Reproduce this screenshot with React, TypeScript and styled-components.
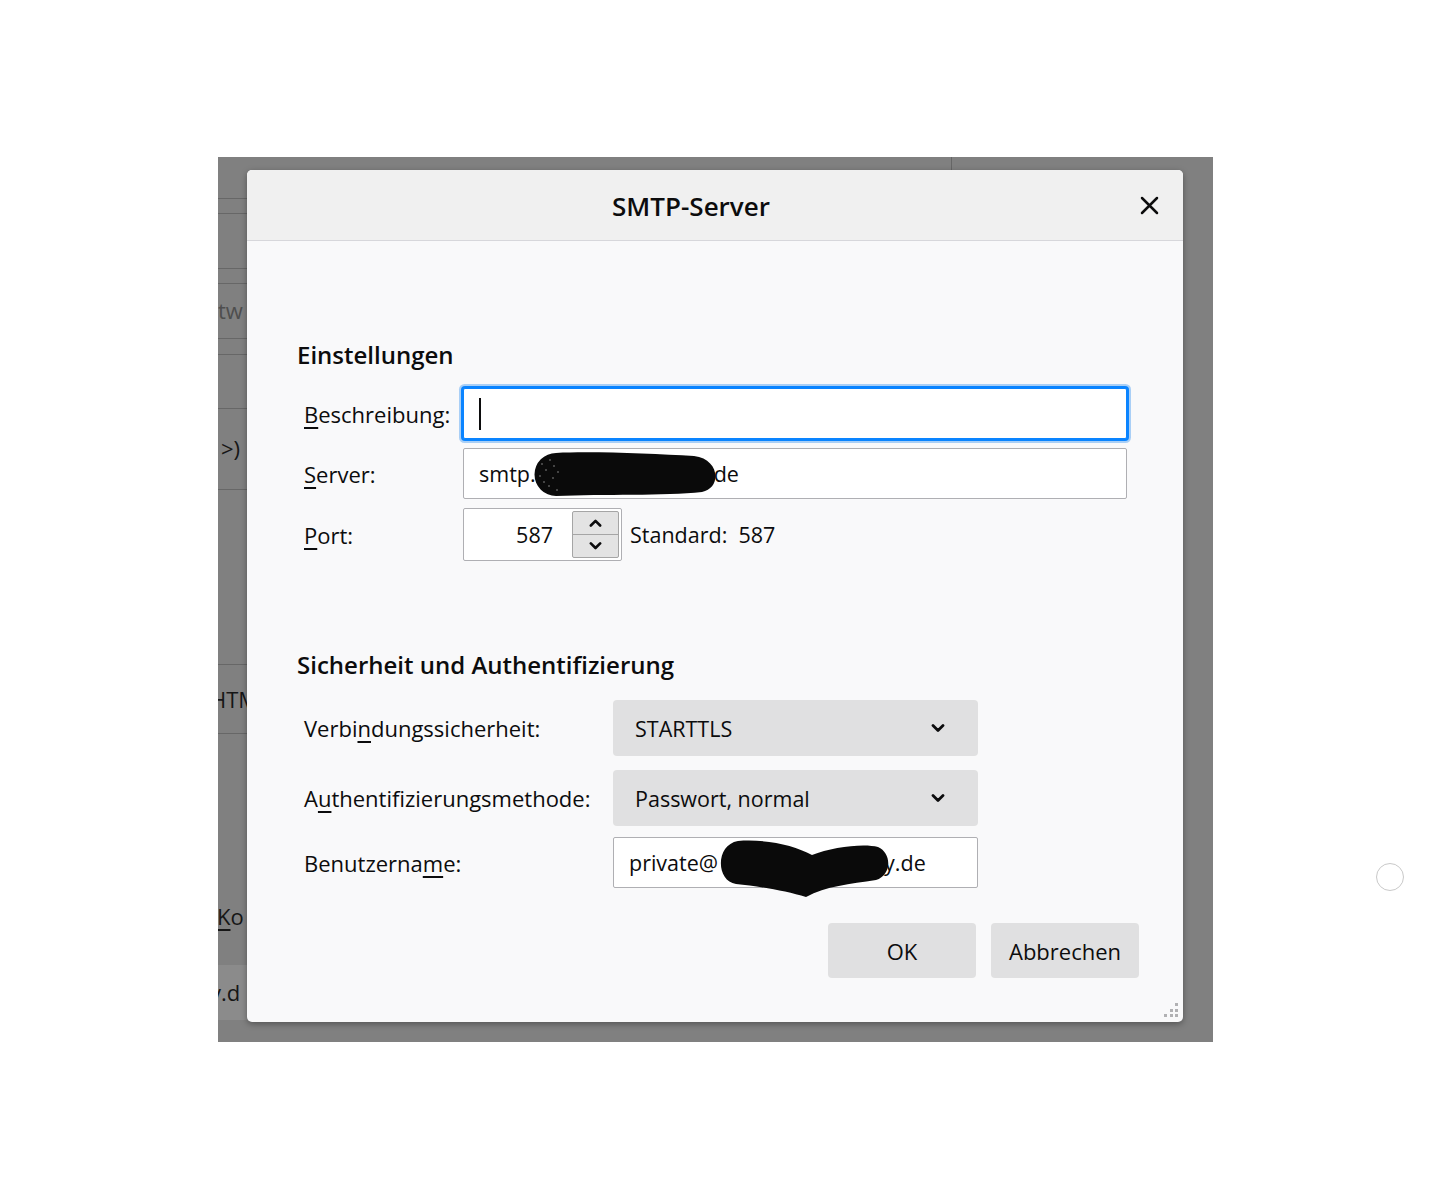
import React from 'react'
import styled, { createGlobalStyle } from 'styled-components'

const GlobalStyle = createGlobalStyle`
  html, body {
    margin: 0;
    padding: 0;
    background: #ffffff;
  }
  body {
    font-family: 'Open Sans', 'Noto Sans', sans-serif;
    color: #0c0c0d;
  }
`

const Page = styled.div`
  display: flex;
  align-items: flex-start;
  padding: 157px 0 0 218px;
  height: 1200px;
  box-sizing: border-box;
`

const Backdrop = styled.div`
  display: grid;
  grid-template-columns: 29px 936px 30px;
  grid-template-rows: 13px 852px 20px;
  background: #808080;
`

const TopStrip = styled.div`
  grid-column: 2 / 4;
  grid-row: 1;
  display: flex;
`

const TopCell = styled.div<{ $w: number }>`
  width: ${({ $w }) => $w}px;
  border-right: 1px solid #666666;
`

const SideStrip = styled.div`
  grid-column: 1;
  grid-row: 1 / 4;
  display: flex;
  flex-direction: column;
  overflow: hidden;
`

const SideRow = styled.div<{ $h: number; $line?: boolean; $band?: boolean }>`
  height: ${({ $h }) => $h}px;
  flex: none;
  box-sizing: border-box;
  border-bottom: ${({ $line }) => ($line ? '1px solid #676767' : 'none')};
  background: ${({ $band }) => ($band ? '#8b8b8b' : 'transparent')};
  display: flex;
  align-items: center;
  white-space: nowrap;
`

const SideText = styled.span<{ $x: number; $dim?: boolean; $y?: number }>`
  font-size: 22px;
  margin-left: ${({ $x }) => $x}px;
  margin-top: ${({ $y }) => $y ?? 0}px;
  color: ${({ $dim }) => ($dim ? '#4e4e4e' : '#161616')};
`

const Dialog = styled.div`
  grid-column: 2;
  grid-row: 2;
  display: flex;
  flex-direction: column;
  background: #f9f9fa;
  border-radius: 5px;
  box-shadow: 0 2px 6px rgba(0, 0, 0, 0.35);
  overflow: hidden;
  position: relative;
`

const Header = styled.div`
  height: 71px;
  flex: none;
  box-sizing: border-box;
  background: #f0f0f0;
  border-bottom: 1px solid #d7d7db;
  display: flex;
  align-items: center;
`

const Title = styled.div`
  flex: 1;
  text-align: center;
  font-size: 26px;
  font-weight: 600;
  color: #0c0c0d;
  padding-top: 2px;
`

const CloseButton = styled.button`
  flex: none;
  margin: 0 22px 0 2px;
  width: 24px;
  height: 24px;
  padding: 0;
  border: none;
  background: transparent;
  display: flex;
  align-items: center;
  justify-content: center;
`

const Body = styled.div`
  padding: 98px 56px 44px 50px;
  display: flex;
  flex-direction: column;
`

const SectionTitle = styled.h2<{ $top?: number }>`
  margin: ${({ $top }) => $top ?? 0}px 0 0 0;
  font-size: 24px;
  line-height: 32px;
  font-weight: 600;
  color: #0c0c0d;
`

const FieldGrid = styled.div<{ $label: number; $top: number }>`
  display: grid;
  grid-template-columns: ${({ $label }) => $label}px 1fr;
  margin-top: ${({ $top }) => $top}px;
`

const Label = styled.div<{ $gap?: number }>`
  margin-top: ${({ $gap }) => $gap ?? 0}px;
  padding-left: 7px;
  font-size: 22px;
  color: #0c0c0d;
  display: flex;
  align-items: center;
  white-space: nowrap;
`

const Key = styled.span`
  text-decoration: underline;
  text-decoration-thickness: 1.5px;
  text-underline-offset: 4px;
`

const Field = styled.div<{ $h: number; $w?: number; $gap?: number; $focused?: boolean }>`
  margin-top: ${({ $gap }) => $gap ?? 0}px;
  height: ${({ $h }) => $h}px;
  width: ${({ $w }) => ($w ? `${$w}px` : 'auto')};
  box-sizing: border-box;
  background: #ffffff;
  border: 1px solid ${({ $focused }) => ($focused ? '#0a84ff' : '#afafb3')};
  box-shadow: ${({ $focused }) => ($focused ? '0 0 0 2px #0a84ff, 0 0 0 4px #a9cff6' : 'none')};
  border-radius: 2px;
  padding-left: 15px;
  display: flex;
  align-items: center;
  font-size: 21.5px;
  color: #0c0c0d;
  white-space: nowrap;
`

const Caret = styled.span`
  width: 2px;
  height: 32px;
  background: #0c0c0d;
`

const Scribble = styled.svg<{ $ml: number; $mr: number; $mt: number }>`
  flex: none;
  margin: ${({ $mt }) => $mt}px ${({ $mr }) => $mr}px 0 ${({ $ml }) => $ml}px;
  position: relative;
  z-index: 1;
`

const PortRow = styled.div<{ $gap: number }>`
  margin-top: ${({ $gap }) => $gap}px;
  display: flex;
  align-items: center;
  gap: 8px;
`

const PortBox = styled.div`
  width: 159px;
  height: 53px;
  box-sizing: border-box;
  background: #ffffff;
  border: 1px solid #afafb3;
  border-radius: 2px;
  display: flex;
  align-items: center;
  justify-content: flex-end;
  padding-right: 2px;
  font-size: 21.5px;
`

const PortValue = styled.span`
  margin-right: 19px;
`

const Spinner = styled.div`
  width: 47px;
  height: 47px;
  box-sizing: border-box;
  border: 1px solid #a5a5a5;
  border-radius: 2px;
  background: #e3e3e3;
  display: grid;
  grid-template-rows: 1fr 1fr;
`

const SpinHalf = styled.div<{ $top?: boolean }>`
  display: flex;
  align-items: center;
  justify-content: center;
  border-bottom: ${({ $top }) => ($top ? '1px solid #a5a5a5' : 'none')};
`

const PlainText = styled.span`
  font-size: 21.5px;
  white-space: pre;
`

const Select = styled.div<{ $h: number; $gap?: number }>`
  margin-top: ${({ $gap }) => $gap ?? 0}px;
  width: 365px;
  height: ${({ $h }) => $h}px;
  box-sizing: border-box;
  background: #e0e0e1;
  border-radius: 4px;
  padding: 0 33px 0 22px;
  display: flex;
  align-items: center;
  justify-content: space-between;
  font-size: 21.5px;
  color: #0c0c0d;
`

const ButtonRow = styled.div`
  display: flex;
  justify-content: flex-end;
  gap: 15px;
  margin-top: 35px;
  margin-right: -12px;
`

const DialogButton = styled.button`
  width: 148px;
  height: 55px;
  border: none;
  border-radius: 4px;
  background: #e0e0e1;
  font-family: inherit;
  font-size: 22px;
  color: #0c0c0d;
  padding: 0;
`

const Grip = styled.div`
  position: absolute;
  right: 4px;
  bottom: 4px;
  width: 15px;
  height: 15px;
  display: grid;
  grid-template-columns: repeat(3, 3px);
  grid-template-rows: repeat(3, 3px);
  gap: 2.5px;
`

const GripDot = styled.span<{ $on: boolean }>`
  background: ${({ $on }) => ($on ? '#b1b1b3' : 'transparent')};
`

const Ring = styled.div`
  width: 26px;
  height: 26px;
  margin: 706px 0 0 163px;
  border-radius: 50%;
  border: 1.5px solid #c9c9c9;
`

const Chevron: React.FC<{ up?: boolean; size?: number }> = ({ up, size = 14 }) => (
  <svg width={size} height={size * 0.6} viewBox="0 0 14 8.4">
    <polyline
      points={up ? '2,7 7,2 12,7' : '2,1.5 7,6.5 12,1.5'}
      fill="none"
      stroke="#0c0c0d"
      strokeWidth="2.8"
      strokeLinecap="round"
      strokeLinejoin="round"
    />
  </svg>
)

const sideRows: { h: number; line?: boolean; band?: boolean; text?: React.ReactNode }[] = [
  { h: 42, line: true },
  { h: 15, line: true },
  { h: 55, line: true },
  { h: 15, line: true },
  { h: 55, line: true, text: <SideText $x={0} $dim $y={-2}>tw</SideText> },
  { h: 16, line: true },
  { h: 54, line: true },
  { h: 81, line: true, text: <SideText $x={3} $y={-2}>&gt;)</SideText> },
  { h: 175, line: true },
  { h: 69, line: true, text: <SideText $x={-8} $y={0}>HTM</SideText> },
  { h: 62 },
  { h: 90 },
  { h: 60, text: <SideText $x={-1}><Key>K</Key>o</SideText> },
  { h: 19 },
  { h: 55, band: true, text: <SideText $x={-8} $y={-2}>y.d</SideText> },
  { h: 22 },
]

export default function App() {
  return (
    <>
      <GlobalStyle />
      <Page>
        <Backdrop>
          <SideStrip>
            {sideRows.map((r, i) => (
              <SideRow key={i} $h={r.h} $line={r.line} $band={r.band}>
                {r.text}
              </SideRow>
            ))}
          </SideStrip>
          <TopStrip>
            <TopCell $w={704} />
          </TopStrip>

          <Dialog>
            <Header>
              <Title>SMTP-Server</Title>
              <CloseButton aria-label="Schließen">
                <svg width="19" height="19" viewBox="0 0 19 19">
                  <path d="M2 2 L17 17 M17 2 L2 17" stroke="#0c0c0d" strokeWidth="2.5" strokeLinecap="round" />
                </svg>
              </CloseButton>
            </Header>

            <Body>
              <SectionTitle>Einstellungen</SectionTitle>
              <FieldGrid $label={166} $top={17}>
                <Label>
                  <span><Key>B</Key>eschreibung:</span>
                </Label>
                <Field $h={51} $focused>
                  <Caret />
                </Field>

                <Label $gap={9}>
                  <span><Key>S</Key>erver:</span>
                </Label>
                <Field $h={51} $gap={9}>
                  smtp.
                  <Scribble $ml={-2} $mr={-6} $mt={2} width="186" height="50" viewBox="0 0 186 50">
                    <path
                      d="M22 3 C 60 1, 120 4, 160 6 C 186 9, 188 38, 168 42 C 130 46, 70 44, 22 46 A 21.5 21.5 0 0 1 22 3 Z"
                      fill="#0a0a0a"
                    />
                    <g fill="#ffffff" opacity="0.55">
                      <circle cx="8" cy="14" r="0.8" />
                      <circle cx="12" cy="20" r="0.8" />
                      <circle cx="6" cy="26" r="0.8" />
                      <circle cx="10" cy="32" r="0.8" />
                      <circle cx="16" cy="10" r="0.8" />
                      <circle cx="15" cy="36" r="0.8" />
                      <circle cx="20" cy="16" r="0.8" />
                      <circle cx="19" cy="28" r="0.8" />
                      <circle cx="24" cy="22" r="0.8" />
                      <circle cx="23" cy="40" r="0.8" />
                    </g>
                  </Scribble>
                  de
                </Field>

                <Label $gap={9}>
                  <span><Key>P</Key>ort:</span>
                </Label>
                <PortRow $gap={9}>
                  <PortBox>
                    <PortValue>587</PortValue>
                    <Spinner>
                      <SpinHalf $top>
                        <Chevron up size={13} />
                      </SpinHalf>
                      <SpinHalf>
                        <Chevron size={13} />
                      </SpinHalf>
                    </Spinner>
                  </PortBox>
                  <PlainText>Standard:  587</PlainText>
                </PortRow>
              </FieldGrid>

              <SectionTitle $top={88}>Sicherheit und Authentifizierung</SectionTitle>
              <FieldGrid $label={316} $top={19}>
                <Label>
                  <span>Verbi<Key>n</Key>dungssicherheit:</span>
                </Label>
                <Select $h={56}>
                  <span>STARTTLS</span>
                  <Chevron />
                </Select>

                <Label $gap={14}>
                  <span>A<Key>u</Key>thentifizierungsmethode:</span>
                </Label>
                <Select $h={56} $gap={14}>
                  <span>Passwort, normal</span>
                  <Chevron />
                </Select>

                <Label $gap={11}>
                  <span>Benutzerna<Key>m</Key>e:</span>
                </Label>
                <Field $h={51} $w={365} $gap={11}>
                  private@
                  <Scribble $ml={-2} $mr={-8} $mt={12} width="176" height="60" viewBox="0 0 176 60">
                    <path
                      d="M22 2 C 50 0, 78 6, 96 16 C 116 8, 148 4, 162 8 C 176 14, 176 36, 160 41 C 134 45, 110 47, 90 58 C 70 52, 42 47, 20 45 C 0 42, -1 6, 22 2 Z"
                      fill="#0a0a0a"
                    />
                  </Scribble>
                  y.de
                </Field>
              </FieldGrid>

              <ButtonRow>
                <DialogButton>OK</DialogButton>
                <DialogButton>Abbrechen</DialogButton>
              </ButtonRow>
            </Body>

            <Grip>
              {[0, 0, 1, 0, 1, 1, 1, 1, 1].map((on, i) => (
                <GripDot key={i} $on={on === 1} />
              ))}
            </Grip>
          </Dialog>
        </Backdrop>
        <Ring />
      </Page>
    </>
  )
}
